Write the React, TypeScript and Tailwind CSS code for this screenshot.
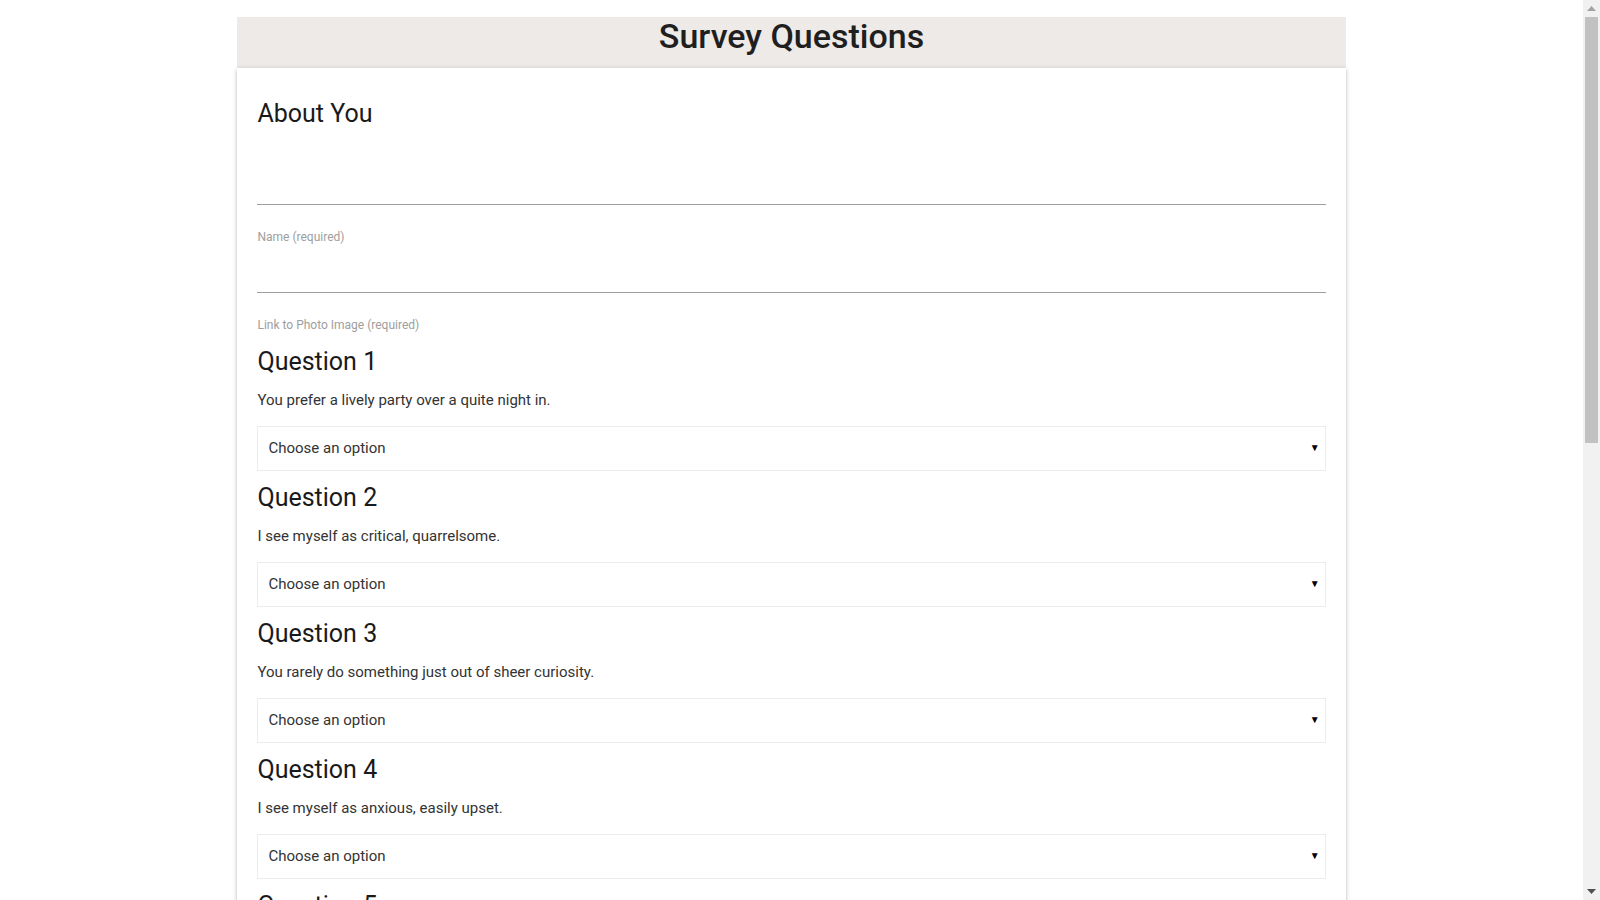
import React from "react";

const questions = [
  "You prefer a lively party over a quite night in.",
  "I see myself as critical, quarrelsome.",
  "You rarely do something just out of sheer curiosity.",
  "I see myself as anxious, easily upset.",
  "I see myself as open to new experiences, complex.",
  "I see myself as reserved, quiet.",
  "You often make a backup plan for a backup plan.",
  "I see myself as disorganized, careless.",
  "I see myself as calm, emotionally stable.",
  "I see myself as conventional, uncreative.",
];

function TextField({ label }: { label: string }) {
  return (
    <div>
      <input
        type="text"
        className="block w-full h-[48px] border-0 border-b border-solid border-[#9e9e9e] bg-transparent outline-none"
      />
      <div className="h-[40px] pt-[25px] text-[12px] leading-[15px] text-[#9e9e9e]">{label}</div>
    </div>
  );
}

function Question({ n, text }: { n: number; text: string }) {
  return (
    <div>
      <h5 className="text-[25px] leading-[29px] font-normal text-[#1a1a1a] mt-[12px]">Question {n}</h5>
      <p className="mt-[12px] text-[15px] leading-[24px] text-[#333]">{text}</p>
      <div className="relative mt-[14px]">
        <select
          defaultValue=""
          className="appearance-none block w-full h-[45px] border border-solid border-[#ececec] bg-white pl-[10px] pr-8 text-[15px] text-[#333] outline-none"
        >
          <option value="" disabled>
            Choose an option
          </option>
          <option value="1">1 (Strongly Disagree)</option>
          <option value="2">2</option>
          <option value="3">3</option>
          <option value="4">4</option>
          <option value="5">5 (Strongly Agree)</option>
        </select>
        <span className="pointer-events-none absolute right-[6px] top-[14px] text-[10px] leading-[16px] text-black">▼</span>
      </div>
    </div>
  );
}

function FakeScrollbar() {
  return (
    <div className="fixed top-0 right-0 w-[17px] h-screen bg-[#f1f1f1] flex flex-col items-center">
      <div className="h-[17px] w-full flex items-center justify-center">
        <svg width="9" height="5" viewBox="0 0 9 5">
          <polygon points="4.5,0 9,5 0,5" fill="#a3a3a3" />
        </svg>
      </div>
      <div className="w-[13px] h-[426px] bg-[#c1c1c1]" />
      <div className="flex-1" />
      <div className="h-[17px] w-full flex items-center justify-center">
        <svg width="9" height="5" viewBox="0 0 9 5">
          <polygon points="0,0 9,0 4.5,5" fill="#505050" />
        </svg>
      </div>
    </div>
  );
}

export default function App() {
  return (
    <div className="bg-white min-h-screen font-['Roboto',sans-serif]">
      <div className="mr-[17px] pt-[17px] pb-[40px]">
        <div className="w-[70%] mx-auto">
          <div className="bg-[#eeeae7] pb-[13px] text-center">
            <h1 className="text-[34px] leading-[38px] font-medium text-[#1f1f1f]">Survey Questions</h1>
          </div>
          <div className="bg-white px-[20px] pt-[32px] pb-[24px] shadow-[0_2px_2px_0_rgba(0,0,0,0.14),0_3px_1px_-2px_rgba(0,0,0,0.12),0_1px_5px_0_rgba(0,0,0,0.2)]">
            <h4 className="text-[25px] leading-[28px] font-normal text-[#1a1a1a]">About You</h4>
            <div className="mt-[29px] pb-[2px]">
              <TextField label="Name (required)" />
              <TextField label="Link to Photo Image (required)" />
            </div>
            {questions.map((q, i) => (
              <Question key={i} n={i + 1} text={q} />
            ))}
            <div className="mt-[28px]">
              <button className="h-[36px] px-[16px] rounded-[2px] bg-[#26a69a] text-white text-[14px] uppercase tracking-[0.5px] shadow-[0_2px_2px_0_rgba(0,0,0,0.14),0_3px_1px_-2px_rgba(0,0,0,0.12),0_1px_5px_0_rgba(0,0,0,0.2)]">
                Submit
              </button>
            </div>
          </div>
        </div>
      </div>
      <FakeScrollbar />
    </div>
  );
}
